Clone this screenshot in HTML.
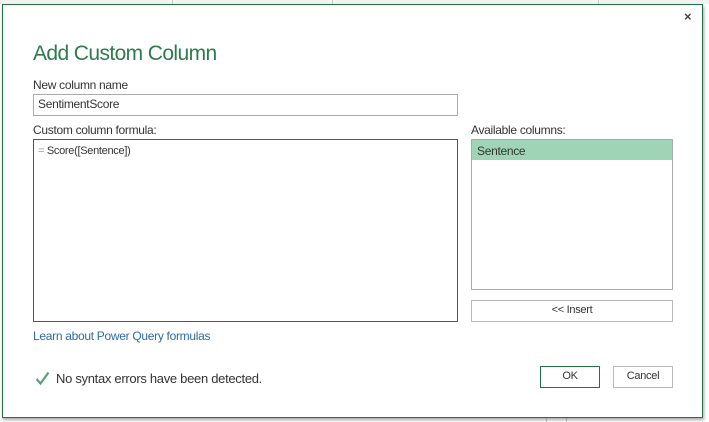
<!DOCTYPE html>
<html><head><style>
body{margin:0;width:709px;height:422px;overflow:hidden;background:#fff;font-family:"Liberation Sans",sans-serif;position:relative}
.a{position:absolute}
.dlg{left:2px;top:4px;width:699px;height:412px;border:1px solid #217346;background:#fff;box-shadow:1px 2px 3px rgba(0,0,0,.35)}
.lbl{font-size:12px;color:#333;letter-spacing:-0.3px}
.box{border:1px solid #aaa;background:#fff;box-sizing:border-box}
.btn{border:1px solid #bbb;box-sizing:border-box;font-size:11px;color:#333;text-align:center;line-height:19px;letter-spacing:-0.3px}
</style></head><body>
<div class="a" style="left:0;top:0;width:709px;height:4px;background:#f3f3f3"></div>
<div class="a" style="left:172px;top:0;width:1px;height:4px;background:#ccc"></div>
<div class="a" style="left:332px;top:0;width:1px;height:4px;background:#ccc"></div>
<div class="a" style="left:598px;top:0;width:1px;height:4px;background:#ccc"></div>
<div class="a" style="left:546px;top:416px;width:1px;height:6px;background:#ccc"></div>
<div class="a" style="left:566px;top:416px;width:1px;height:6px;background:#ccc"></div>
<div class="a dlg"></div>
<div class="a" style="left:684px;top:9px;font-size:13px;font-weight:bold;color:#444">×</div>
<div class="a" style="left:33px;top:42px;font-size:21px;color:#2e7a4e;letter-spacing:-0.6px">Add Custom Column</div>
<div class="a lbl" style="left:33px;top:78px">New column name</div>
<div class="a box" style="left:33px;top:94px;width:425px;height:22px"></div>
<div class="a lbl" style="left:38px;top:97px">SentimentScore</div>
<div class="a lbl" style="left:33px;top:123px">Custom column formula:</div>
<div class="a box" style="left:33px;top:139px;width:425px;height:183px;border-color:#217346"></div>
<div class="a" style="left:38px;top:145px;font-size:11px;color:#333;letter-spacing:-0.3px"><span style="color:#999">=</span> Score([Sentence])</div>
<div class="a lbl" style="left:471px;top:123px">Available columns:</div>
<div class="a box" style="left:471px;top:139px;width:202px;height:151px"></div>
<div class="a" style="left:472px;top:140px;width:200px;height:20px;background:#9fd5b6"></div>
<div class="a lbl" style="left:477px;top:144px">Sentence</div>
<div class="a btn" style="left:471px;top:300px;width:202px;height:22px">&lt;&lt; Insert</div>
<div class="a" style="left:33px;top:329px;font-size:12px;color:#2f6aa4;letter-spacing:-0.3px">Learn about Power Query formulas</div>
<svg class="a" style="left:35px;top:371px" width="15" height="15"><path d="M1.5 8 L5.5 12.5 L13.5 1.5" stroke="#5a9f7c" stroke-width="2.2" fill="none"/></svg>
<div class="a" style="left:56px;top:371px;font-size:13px;color:#333;letter-spacing:-0.3px">No syntax errors have been detected.</div>
<div class="a btn" style="left:540px;top:366px;width:60px;height:22px;border-color:#217346">OK</div>
<div class="a btn" style="left:613px;top:366px;width:60px;height:22px">Cancel</div>
</body></html>
